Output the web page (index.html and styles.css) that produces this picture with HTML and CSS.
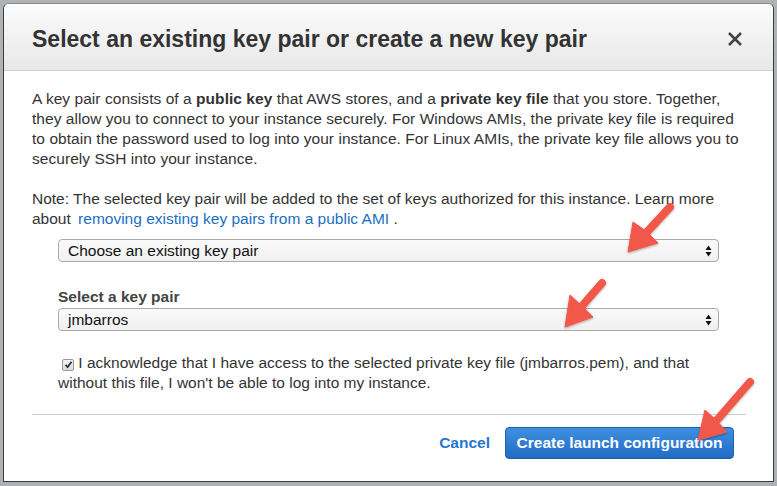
FILE: index.html
```html
<!DOCTYPE html>
<html>
<head>
<meta charset="utf-8">
<link rel="stylesheet" href="styles.css">
</head>
<body>
<div class="dialog">
  <div class="header">
    <h1 class="title">Select an existing key pair or create a new key pair</h1>
    <span class="close">
      <svg width="16" height="16" viewBox="0 0 16 16"><path d="M2 2 L14 14 M14 2 L2 14" stroke="#444" stroke-width="2.6" stroke-linecap="butt"/></svg>
    </span>
  </div>
  <div class="content">
    <p class="intro">A key pair consists of a <b>public key</b> that AWS stores, and a <b>private key file</b> that you store. Together, they allow you to connect to your instance securely. For Windows AMIs, the private key file is required to obtain the password used to log into your instance. For Linux AMIs, the private key file allows you to securely SSH into your instance.</p>
    <p class="note">Note: The selected key pair will be added to the set of keys authorized for this instance. Learn more about <a class="link">removing existing key pairs from a public AMI</a> .</p>
    <div class="field first">
      <div class="select"><span>Choose an existing key pair</span><span class="updown"><svg width="7" height="12" viewBox="0 0 7 12"><path d="M3.5 0.5 L6.5 5 L0.5 5 Z M3.5 11.5 L6.5 7 L0.5 7 Z" fill="#111"/></svg></span></div>
    </div>
    <div class="field">
      <div class="label">Select a key pair</div>
      <div class="select"><span>jmbarros</span><span class="updown"><svg width="7" height="12" viewBox="0 0 7 12"><path d="M3.5 0.5 L6.5 5 L0.5 5 Z M3.5 11.5 L6.5 7 L0.5 7 Z" fill="#111"/></svg></span></div>
    </div>
    <p class="ack field"><span class="check"><svg width="9" height="9" viewBox="0 0 9 9"><path d="M1.5 4.8 L3.6 7 L7.6 1.8" stroke="#333" stroke-width="1.8" fill="none"/></svg></span> I acknowledge that I have access to the selected private key file (jmbarros.pem), and that without this file, I won't be able to log into my instance.</p>
    <div class="rule"></div>
    <div class="footer">
      <a class="cancel">Cancel</a>
      <button class="primary">Create launch configuration</button>
    </div>
  </div>
</div>
<svg class="arrows" width="777" height="486" viewBox="0 0 777 486">
  <defs>
    <filter id="sh" x="-20%" y="-20%" width="140%" height="140%">
      <feDropShadow dx="0" dy="1" stdDeviation="1.2" flood-color="#000" flood-opacity="0.35"/>
    </filter>
  </defs>
  <g fill="#f2584a" stroke="#f2584a" filter="url(#sh)">
    <line x1="670" y1="207" x2="647" y2="232" stroke-width="8" stroke-linecap="round"/>
    <polygon points="628,252 633,222 646,231 658,243" stroke-width="1" stroke-linejoin="round"/>
    <line x1="602" y1="283" x2="582" y2="306" stroke-width="8" stroke-linecap="round"/>
    <polygon points="565,327 570,295 581,305 593,317" stroke-width="1" stroke-linejoin="round"/>
    <line x1="750" y1="382" x2="717" y2="420" stroke-width="8" stroke-linecap="round"/>
    <polygon points="698,440 705,410 716,420 727,432" stroke-width="1" stroke-linejoin="round"/>
  </g>
</svg>
</body>
</html>
```
FILE: styles.css
```css
html, body {
  margin: 0;
  padding: 0;
}
body {
  width: 777px;
  height: 486px;
  background: #aeb2b6;
  font-family: "Liberation Sans", Arial, sans-serif;
  color: #333;
  position: relative;
  overflow: hidden;
}
.dialog {
  box-sizing: border-box;
  margin: 3px 0 0 3px;
  width: 771px;
  height: 479px;
  background: #fff;
  border: 1px solid #3c3c3c;
  border-top-color: #8a8a8a;
  border-radius: 6px 6px 0 0;
  overflow: hidden;
}
.header {
  height: 66px;
  background: linear-gradient(#fbfbfb, #e8e8e8);
  border-bottom: 1px solid #d2d2d2;
  display: flex;
  align-items: center;
  justify-content: space-between;
  padding: 0 30px 0 28px;
}
.title {
  margin: 0;
  font-size: 23px;
  font-weight: bold;
  color: #333;
  padding-top: 4px;
}
.close {
  display: flex;
  padding-top: 4px;
}
.content {
  padding: 18px 27px 0 28px;
}
p {
  margin: 0;
  font-size: 15.5px;
  line-height: 20px;
  color: #333;
}
.intro {
  letter-spacing: 0.05px;
}
.note {
  margin-top: 20px;
}
.link {
  color: #1a6fc2;
  margin-left: 3px;
}
.field {
  margin-left: 26px;
  margin-right: 27px;
}
.first {
  margin-top: 10px;
}
.label {
  margin-top: 25px;
  font-size: 15.5px;
  line-height: 20px;
  font-weight: bold;
  color: #444;
  margin-bottom: 1px;
}
.select {
  box-sizing: border-box;
  height: 23px;
  border: 1px solid #a9a9a9;
  border-radius: 4px;
  background: linear-gradient(#fafafa, #f0f0f0);
  display: flex;
  align-items: center;
  justify-content: space-between;
  padding: 0 6px 0 9px;
  font-size: 15.5px;
  color: #111;
}
.updown {
  display: flex;
}
.ack {
  margin-top: 22px;
}
.check {
  display: inline-flex;
  align-items: center;
  justify-content: center;
  box-sizing: border-box;
  width: 12px;
  height: 12px;
  margin-left: 4px;
  border: 1px solid #9a9a9a;
  border-radius: 2px;
  background: linear-gradient(#f4f4f4, #dcdcdc);
  vertical-align: -1px;
}
.rule {
  margin-top: 21px;
  height: 1px;
  background: #cfcfcf;
}
.footer {
  display: flex;
  justify-content: flex-end;
  align-items: center;
  gap: 15px;
  margin-top: 12px;
  padding-right: 12px;
}
.cancel {
  color: #1f78d1;
  font-weight: bold;
  font-size: 15.5px;
}
.primary {
  width: 229px;
  height: 32px;
  border: 1px solid #1f5fa8;
  border-radius: 4px;
  background: linear-gradient(#3f8fe0, #1f6dc4);
  color: #fff;
  font-family: "Liberation Sans", Arial, sans-serif;
  font-weight: bold;
  font-size: 15.5px;
  padding: 0;
}
.arrows {
  position: absolute;
  left: 0;
  top: 0;
}
```
